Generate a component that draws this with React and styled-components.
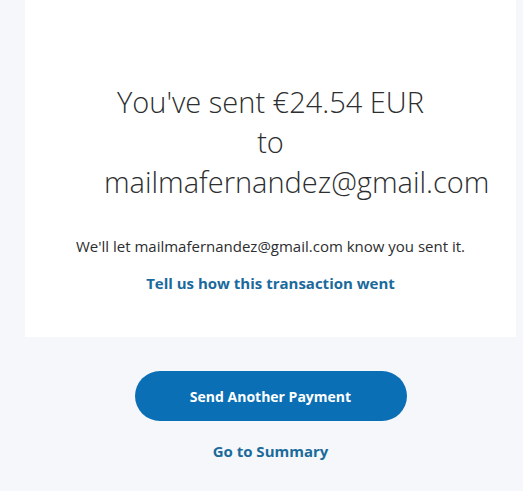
import React from 'react';
import styled, { createGlobalStyle } from 'styled-components';

const Colors = {
    pageBg: '#f5f7fa',
    cardBg: '#ffffff',
    text: '#2c2e2f',
    link: '#1b6a9c',
    primary: '#0a6fb5',
};

const GlobalStyle = createGlobalStyle`
    html, body {
        margin: 0;
        padding: 0;
        background: ${Colors.pageBg};
        font-family: "Open Sans", "Liberation Sans", sans-serif;
        color: ${Colors.text};
    }
`

const Page = styled.div`
    min-height: 100vh;
    display: flex;
    flex-direction: column;
`

const Card = styled.section`
    background: ${Colors.cardBg};
    margin: 0 7px 0 25px;
    height: 337px;
    padding-top: 82px;
    box-sizing: border-box;
    display: flex;
    flex-direction: column;
    align-items: center;
`

const Heading = styled.h1`
    width: 333px;
    margin: 0;
    font-size: 29px;
    line-height: 40px;
    font-weight: 300;
    text-align: center;
    color: ${Colors.text};
`

const Note = styled.p`
    margin: 34px 0 0;
    font-size: 15px;
    line-height: 20px;
    text-align: center;
`

const TextLink = styled.a`
    display: block;
    margin-top: ${props => props.$gap || 17}px;
    font-size: 15px;
    line-height: 20px;
    font-weight: 700;
    color: ${Colors.link};
    text-decoration: none;
    text-align: center;
    cursor: pointer;
`

const Actions = styled.div`
    display: flex;
    flex-direction: column;
    align-items: center;
    padding: 34px 0 0 25px;
    margin-right: 7px;
`

const PrimaryButton = styled.button`
    width: 272px;
    height: 50px;
    border: none;
    border-radius: 25px;
    background: ${Colors.primary};
    color: #fff;
    font-family: inherit;
    font-size: 14px;
    font-weight: 700;
    cursor: pointer;
`

function App() {
    return (
        <Page>
            <GlobalStyle />
            <Card>
                <Heading>
                    You've sent €24.54 EUR<br />
                    to<br />
                    mailmafernandez@gmail.com
                </Heading>
                <Note>We'll let mailmafernandez@gmail.com know you sent it.</Note>
                <TextLink>Tell us how this transaction went</TextLink>
            </Card>
            <Actions>
                <PrimaryButton>Send Another Payment</PrimaryButton>
                <TextLink $gap={20}>Go to Summary</TextLink>
            </Actions>
        </Page>
    )
}

export default App;
